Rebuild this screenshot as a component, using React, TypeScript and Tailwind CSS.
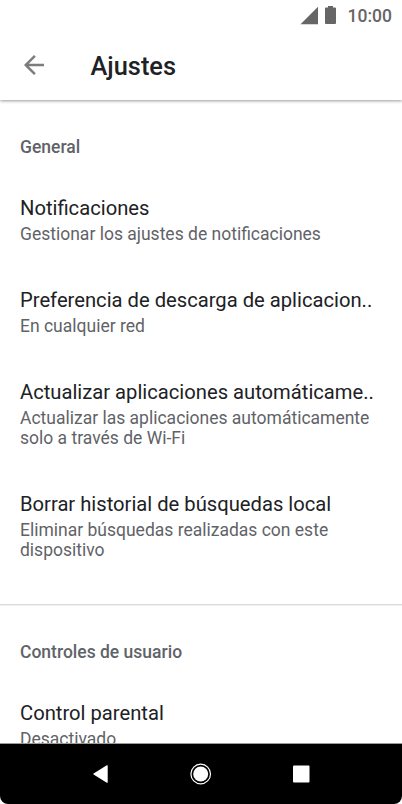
const general = [
  { title: "Notificaciones", summary: "Gestionar los ajustes de notificaciones" },
  { title: "Preferencia de descarga de aplicacion..", summary: "En cualquier red" },
  {
    title: "Actualizar aplicaciones automáticame..",
    summary: "Actualizar las aplicaciones automáticamente solo a través de Wi-Fi",
  },
  {
    title: "Borrar historial de búsquedas local",
    summary: "Eliminar búsquedas realizadas con este dispositivo",
  },
];

const userControls = [{ title: "Control parental", summary: "Desactivado" }];

type Item = { title: string; summary: string };

function Section({ label, items }: { label: string; items: Item[] }) {
  return (
    <section>
      <h2 className="pt-[35px] pb-[17px] pl-5 text-[17.5px] leading-5 font-medium text-[#5f6368]">{label}</h2>
      {items.map((item) => (
        <div key={item.title} className="py-[22px] pr-6 pl-5">
          <p className="text-[20.2px] leading-6 whitespace-nowrap text-[#202124]">{item.title}</p>
          <p className="mt-1 text-[17.5px] leading-5 text-[#5f6368]">{item.summary}</p>
        </div>
      ))}
    </section>
  );
}

function StatusBar() {
  return (
    <div className="relative z-20 flex h-[31px] shrink-0 items-center justify-end bg-white pr-[10px] text-[#666666]">
      <svg width="40" height="20" viewBox="0 0 40 20" fill="currentColor">
        <path d="M19 0.8V18.3H1.5Z" />
        <path d="M29 0h5v1.6h2q1 0 1 1V17q0 1-1 1h-9q-1 0-1-1V2.6q0-1 1-1h2z" />
      </svg>
      <span className="ml-[9px] text-[17.5px] leading-5 font-medium">10:00</span>
    </div>
  );
}

export default function App() {
  return (
    <main className="flex h-[804px] w-[402px] flex-col overflow-hidden bg-white font-['Roboto',sans-serif]">
      <StatusBar />

      <header className="z-10 flex h-[69px] shrink-0 items-center bg-white pb-px pl-[19px] shadow-[0_1px_3px_rgba(0,0,0,0.4)]">
        <svg width="30" height="30" viewBox="0 0 24 24" fill="#7c7c7c">
          <path d="M20 11H7.83l5.59-5.59L12 4l-8 8 8 8 1.41-1.41L7.83 13H20v-2z" />
        </svg>
        <h1 className="ml-[41.5px] pt-px text-[25.4px] leading-8 font-medium text-[#202124]">Ajustes</h1>
      </header>

      <div className="min-h-0 flex-1 overflow-hidden pt-[2px]">
        <Section label="General" items={general} />
        <div className="mt-[22px] mb-px h-[2px] border-b border-[#efefef] bg-[#dadada]" />
        <Section label="Controles de usuario" items={userControls} />
      </div>

      <nav className="h-[61px] shrink-0 border-t border-[#999999] bg-white">
        <div className="flex h-full items-center justify-center gap-[70px] rounded-b-[8px] bg-black">
          <svg width="30" height="30" viewBox="0 0 30 30" fill="#fff">
            <path d="M21.7 6.8v16.4q0 1-.9.5L7.6 15.6q-.8-.6 0-1.2L20.8 6.3q.9-.5.9.5z" />
          </svg>
          <svg width="30" height="30" viewBox="0 0 30 30" fill="#fff">
            <circle cx="14.7" cy="15" r="7.5" />
            <circle cx="14.7" cy="15" r="9.8" fill="none" stroke="#fff" strokeWidth="1.2" />
          </svg>
          <svg width="30" height="30" viewBox="0 0 30 30" fill="#fff">
            <rect x="7" y="6.5" width="16.5" height="17" rx="1" />
          </svg>
        </div>
      </nav>
    </main>
  );
}
